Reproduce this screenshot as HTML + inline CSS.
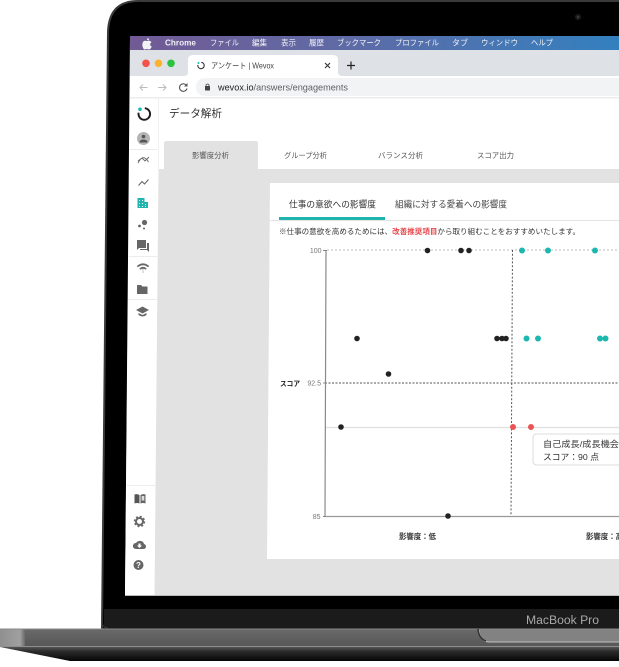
<!DOCTYPE html>
<html><head><meta charset="utf-8">
<style>
html,body{margin:0;padding:0;background:#fff;width:619px;height:667px;overflow:hidden}
svg{display:block;filter:blur(.3px)}
text{font-family:"Liberation Sans","Noto Sans CJK JP",sans-serif}
</style></head><body>
<svg width="619" height="667" viewBox="0 0 619 667" xmlns="http://www.w3.org/2000/svg">
<defs>
<linearGradient id="menu" x1="0" x2="1" y1="0" y2="0"><stop offset="0" stop-color="#725a94"/><stop offset=".45" stop-color="#5e6ba6"/><stop offset="1" stop-color="#3380bf"/></linearGradient>
<linearGradient id="base" x1="0" x2="0" y1="0" y2="1"><stop offset="0" stop-color="#6a6a6a"/><stop offset="1" stop-color="#565656"/></linearGradient>
<linearGradient id="under" x1="0" x2="0" y1="0" y2="1"><stop offset="0" stop-color="#555"/><stop offset=".3" stop-color="#2c2c2c"/><stop offset="1" stop-color="#050505"/></linearGradient>
<linearGradient id="left" x1="0" x2="1" y1="0" y2="0"><stop offset="0" stop-color="#8f8f8f"/><stop offset=".8" stop-color="#a0a0a0"/><stop offset="1" stop-color="#6a6a6a"/></linearGradient>
</defs>
<!-- lid -->
<path d="M107 32Q108 0 138 0H619V630H101Z" fill="#3a3a3a"/>
<path d="M109 32Q110 2 138 2H619V628H103Z" fill="#000"/>
<rect x="104" y="609" width="515" height="20" fill="#1b1b1b"/>
<path d="M102 609V622Q103 628 108 628" fill="none" stroke="#333"/>
<circle cx="578" cy="17" r="3" fill="#1c1c1c"/><circle cx="578" cy="17" r="1" fill="#444"/>
<!-- screen -->
<path d="M130 36H619V596H125Z" fill="#fff"/>
<path d="M130 36H619V50H130Z" fill="url(#menu)"/>
<path d="M130 50H619V76H130Z" fill="#dee1e6"/>
<path d="M130 76H619V97H130Z" fill="#fff"/>
<path d="M196 87Q196 78 206 78H619V96H206Q196 96 196 87Z" fill="#f1f3f4"/>
<rect x="130" y="97" width="489" height="1.5" fill="#eceded"/>
<!-- menu text -->
<g fill="#f2f2f6" font-size="7.8">
<path d="M147 38.5Q149.5 38 149 40.3Q147 40.6 147 38.500ZM143.600 41.200C145 40.200 146.500 41.300 147.500 41C148.500 40.600 150.300 40.400 151.500 42.200C149.600 43.200 149.800 45.800 151.800 46.500C151.200 48 150.100 49.500 149 49.500C148 49.500 147.700 49 146.800 49C145.900 49 145.500 49.500 144.600 49.500C143 49.200 141 44 143.600 41.200Z"/>
<text x="165" y="45.500" font-weight="700" font-size="8.500" textLength="31" lengthAdjust="spacingAndGlyphs">Chrome</text>
<text x="210" y="45.500" textLength="29" lengthAdjust="spacingAndGlyphs">ファイル</text>
<text x="252" y="45.500" textLength="15" lengthAdjust="spacingAndGlyphs">編集</text>
<text x="281" y="45.500" textLength="15" lengthAdjust="spacingAndGlyphs">表示</text>
<text x="309" y="45.500" textLength="15" lengthAdjust="spacingAndGlyphs">履歴</text>
<text x="337" y="45.500" textLength="44" lengthAdjust="spacingAndGlyphs">ブックマーク</text>
<text x="395" y="45.500" textLength="44" lengthAdjust="spacingAndGlyphs">プロファイル</text>
<text x="452" y="45.500" textLength="16" lengthAdjust="spacingAndGlyphs">タブ</text>
<text x="481" y="45.500" textLength="37" lengthAdjust="spacingAndGlyphs">ウィンドウ</text>
<text x="531" y="45.500" textLength="22" lengthAdjust="spacingAndGlyphs">ヘルプ</text>
</g>
<!-- traffic -->
<circle cx="146" cy="63.300" r="3.800" fill="#f2544c"/><circle cx="158.500" cy="63.300" r="3.800" fill="#fbb32e"/><circle cx="171" cy="63.300" r="3.800" fill="#29c33f"/>
<!-- tab -->
<path d="M184 76Q188 76 188 72V60Q188 55 193 55H333Q338 55 338 60V72Q338 76 342 76Z" fill="#fff"/>
<circle cx="201" cy="65.500" r="3.200" fill="none" stroke="#333" stroke-width="1.100" stroke-dasharray="15 5.100" transform="rotate(-85 201 65.500)"/>
<circle cx="198.500" cy="63" r="1" fill="#1bb7b0"/>
<text x="211" y="68.500" font-size="8" fill="#444" textLength="63" lengthAdjust="spacingAndGlyphs">アンケート | Wevox</text>
<path d="M325 63L330 68M330 63L325 68" stroke="#333" stroke-width="1.100"/>
<path d="M351 61.500V69.500M347 65.500H355" stroke="#222" stroke-width="1.200"/>
<!-- toolbar -->
<path d="M147.500 87.500H140M143 84.500L140 87.500L143 90.500" fill="none" stroke="#b9bcc0" stroke-width="1"/>
<path d="M158 87.500H166M163 84.500L166 87.500L163 90.500" fill="none" stroke="#b9bcc0" stroke-width="1"/>
<path d="M186.500 85.500A3.800 3.800 0 1 0 187 88.500" fill="none" stroke="#555" stroke-width="1.100"/><path d="M187.500 83V86.500H184Z" fill="#555"/>
<rect x="205" y="86" width="5" height="4.500" rx=".5" fill="#444"/><path d="M206 86V85Q207.500 83 209 85V86" fill="none" stroke="#444" stroke-width=".8"/>
<text x="218" y="90.500" font-size="9.300" textLength="130" lengthAdjust="spacingAndGlyphs"><tspan fill="#222">wevox.io</tspan><tspan fill="#5c5f63">/answers/engagements</tspan></text>
<!-- page -->
<path d="M158 169H619V596H154Z" fill="#e2e2e2"/>
<path d="M130 98.500H158.500V169L154.500 596H125Z" fill="#fff"/>
<path d="M158.500 98.500V169" stroke="#f0f0f0"/>
<path d="M164 169V143.500Q164 141 166.500 141H255.500Q258 141 258 143.500V169Z" fill="#e2e2e2"/>
<text x="169" y="117" font-size="11" fill="#333" textLength="53" lengthAdjust="spacingAndGlyphs">データ解析</text>
<g font-size="7.500" fill="#555">
<text x="192" y="158" textLength="37" lengthAdjust="spacingAndGlyphs">影響度分析</text>
<text x="284" y="158" textLength="43" lengthAdjust="spacingAndGlyphs">グループ分析</text>
<text x="378" y="158" textLength="45" lengthAdjust="spacingAndGlyphs">バランス分析</text>
<text x="477" y="158" textLength="37" lengthAdjust="spacingAndGlyphs">スコア出力</text>
</g>
<!-- sidebar separators -->
<g stroke="#ececec" stroke-width="1"><path d="M129 149.500H157M129 256.500H157M128.500 299.500H156.500M127 485.500H155"/></g>
<!-- sidebar icons -->
<circle cx="144.300" cy="114" r="5.800" fill="none" stroke="#1d1d1d" stroke-width="1.900" stroke-dasharray="28 8.400" transform="rotate(-85 144.300 114)"/>
<circle cx="140" cy="109.300" r="1.800" fill="#17b8b0"/>
<circle cx="143.500" cy="138.500" r="6.500" fill="#b5b5b5"/><circle cx="143.500" cy="136.500" r="1.800" fill="#555"/><path d="M139.500 142.500Q139.500 139.500 143.500 139.500Q147.500 139.500 147.500 142.500Z" fill="#555"/>
<path d="M138 163Q143 153 148.500 162M138 161L142 158L145 161L149 157" fill="none" stroke="#666" stroke-width=".9"/>
<path d="M138.500 185.500L142 181.500L144.500 184L148.500 179.500" fill="none" stroke="#666" stroke-width="1.100"/>
<path d="M137.500 198H144.500V202H148V208H137.500Z" fill="#1fb5ae"/><g fill="#fff"><rect x="139" y="200" width="1" height="1"/><rect x="142" y="200" width="1" height="1"/><rect x="139" y="203" width="1" height="1"/><rect x="142" y="203" width="1" height="1"/><rect x="145" y="204" width="1" height="1"/><rect x="139" y="206" width="1" height="1"/><rect x="142" y="206" width="1" height="1"/><rect x="145" y="206" width="1" height="1"/></g>
<circle cx="144.500" cy="222.500" r="2.600" fill="#666"/><circle cx="139.500" cy="226" r="1.400" fill="#666"/><circle cx="144" cy="228.500" r="1" fill="#666"/>
<path d="M137 240H146V248H139L137 250Z M147 243H149V252L147 250H140V249H147Z" fill="#666"/>
<path d="M137 266Q143 261 149 266L148 267Q143 263 138 267ZM139.500 268.500Q143 265.500 146.500 268.500L145.500 269.500Q143 267.500 140.500 269.500ZM143 268V273" fill="#666" stroke="#666" stroke-width=".4"/>
<path d="M137 285.500Q137 285 137.500 285H141L142.500 286.500H147.500V294H137Z" fill="#666"/>
<path d="M142.500 306.500L149 310L142.500 313.500L136 310Z" fill="#666"/><path d="M138.500 313V315Q142.500 318 146.500 315V313L142.500 315Z" fill="#666"/>
<path d="M134.500 494.500Q137 493.500 139.500 495V503.500Q137 502.500 134.500 503.500Z" fill="#555"/><path d="M140.500 495Q143 493.500 145.500 494.500V503.500Q143 502.500 140.500 503.500Z" fill="#666"/><rect x="141.700" y="496" width="2.600" height="4.500" fill="#ddd"/>
<circle cx="139.500" cy="521.500" r="3.500" fill="none" stroke="#666" stroke-width="2"/><circle cx="139.500" cy="521.500" r="5" fill="none" stroke="#666" stroke-width="1.500" stroke-dasharray="2 1.930"/>
<path d="M136 549Q132.500 548.500 133 545.500Q133.500 543 136 543Q138 540.500 141 541Q143.500 541.500 144 544Q146 544.500 146 546.500Q146 549 143 549Z" fill="#666"/><path d="M138.500 543.500H140.500V545.500H142L139.500 548L137 545.500H138.500Z" fill="#fff"/>
<circle cx="138.500" cy="565" r="5" fill="#666"/><text x="138.500" y="568" font-size="8" font-weight="700" fill="#fff" text-anchor="middle">?</text>
<!-- card -->
<path d="M270 183H619V559H267Z" fill="#fff"/>
<text x="289" y="207.500" font-size="9" fill="#333" textLength="87" lengthAdjust="spacingAndGlyphs">仕事の意欲への影響度</text>
<text x="395" y="207.500" font-size="9" fill="#444" textLength="112" lengthAdjust="spacingAndGlyphs">組織に対する愛着への影響度</text>
<rect x="269.500" y="220" width="350" height="1" fill="#e4e4e4"/>
<rect x="279" y="217" width="106" height="3" fill="#1fb5ae"/>
<text x="279" y="234" font-size="7.500" fill="#333" textLength="301" lengthAdjust="spacingAndGlyphs"><tspan font-weight="700">※</tspan>仕事の意欲を高めるためには、<tspan fill="#e5484d" font-weight="700">改善推奨項目</tspan>から取り組むことをおすすめいたします。</text>
<!-- chart -->
<path d="M327 250H619" stroke="#bdbdbd" stroke-width="1" stroke-dasharray="2 2"/>
<path d="M325 383H619" stroke="#555" stroke-width="1" stroke-dasharray="2 1.500"/>
<path d="M325 427.500H619" stroke="#e0e0e0" stroke-width="1.300"/>
<path d="M326 250L325 516" stroke="#8a8a8a" stroke-width="1.200"/>
<path d="M324 516.500H619" stroke="#999" stroke-width="1.300"/>
<path d="M512.500 250L511 516" stroke="#555" stroke-width="1" stroke-dasharray="2 1.800"/>
<path d="M323 250.500H327M323 383H326M323 516.500H326" stroke="#888"/>
<g font-size="7" fill="#777">
<text x="321.500" y="253" text-anchor="end">100</text>
<text x="321" y="385.500" text-anchor="end">92.5</text>
<text x="320.500" y="519" text-anchor="end">85</text>
</g>
<text x="280" y="386" font-size="7" font-weight="700" fill="#222" textLength="20" lengthAdjust="spacingAndGlyphs">スコア</text>
<text x="399" y="539" font-size="7.500" font-weight="700" fill="#333" textLength="37" lengthAdjust="spacingAndGlyphs">影響度：低</text>
<text x="586" y="539" font-size="7.500" font-weight="700" fill="#333" textLength="37" lengthAdjust="spacingAndGlyphs">影響度：高</text>
<g fill="#222">
<circle cx="427.500" cy="250.500" r="2.800"/><circle cx="461" cy="250.500" r="2.800"/><circle cx="469" cy="250.500" r="2.800"/>
<circle cx="357" cy="338.500" r="2.800"/><circle cx="497" cy="338.500" r="2.800"/><circle cx="502" cy="338.500" r="2.800"/><circle cx="506" cy="338.500" r="2.800"/>
<circle cx="388.500" cy="374" r="2.800"/><circle cx="341" cy="427" r="2.800"/><circle cx="448" cy="516" r="2.800"/>
</g>
<g fill="#1cb8b0">
<circle cx="522" cy="250.500" r="3"/><circle cx="548" cy="250.500" r="3"/><circle cx="595" cy="250.500" r="3"/>
<circle cx="526.500" cy="338.500" r="3"/><circle cx="538" cy="338.500" r="3"/><circle cx="600" cy="338.500" r="3"/><circle cx="605.500" cy="338.500" r="3"/>
</g>
<circle cx="513" cy="427" r="3" fill="#ea5455"/><circle cx="531" cy="427" r="3" fill="#ea5455"/>
<!-- tooltip -->
<path d="M625 434H537Q533 434 533 438V461Q533 465 537 465H625" fill="#fff" stroke="#dcdcdc"/>
<text x="543" y="447" font-size="8.500" fill="#333" textLength="76" lengthAdjust="spacingAndGlyphs">自己成長/成長機会</text>
<text x="543" y="460" font-size="8.500" fill="#333" textLength="56" lengthAdjust="spacingAndGlyphs">スコア：90 点</text>
<!-- screen bottom edge -->
<path d="M125 595.500H619" stroke="#bbb" stroke-width="1"/>
<rect x="104" y="596" width="515" height="13" fill="#000"/>
<text x="526" y="624" font-size="11.500" fill="#a8a8a8" textLength="73" lengthAdjust="spacingAndGlyphs">MacBook Pro</text>
<!-- base -->
<path d="M0 629H619V647H0Z" fill="url(#base)"/>
<path d="M0 630Q0 629 2 629H25V647H0Z" fill="url(#left)"/>
<path d="M0 629H619" stroke="#8a8a8a" stroke-width="1"/>
<path d="M0 646.500H619" stroke="#8e8e8e" stroke-width="1"/>
<path d="M479 629.500H619V642.500H490Q480 642.500 479 632Z" fill="#828282"/>
<path d="M479 630Q480 642 490 642H619" fill="none" stroke="#c0c0c0" stroke-width="1"/>
<path d="M479 630Q480 640 487 642" fill="none" stroke="#333" stroke-width="1.500" transform="translate(-1,-1)"/>
<path d="M0 647H619V661H70Z" fill="url(#under)"/>
</svg>
</body></html>
